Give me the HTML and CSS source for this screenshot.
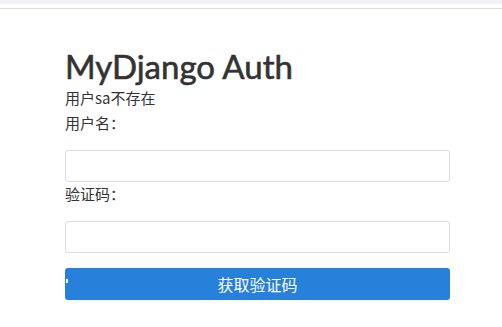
FILE: index.html
```html
<!DOCTYPE html>
<html lang="zh-CN">
<head>
<meta charset="utf-8">
<link rel="stylesheet" href="styles.css">
</head>
<body>
<div class="topbar"></div>
<div class="divider"></div>
<main class="container">
  <h1 class="title">MyDjango Auth</h1>
  <div class="error">用户sa不存在</div>
  <form class="form">
    <label class="label first">用户名：</label>
    <input class="input" type="text">
    <label class="label">验证码：</label>
    <input class="input" type="text">
    <button class="btn" type="button"><span class="notch"></span>获取验证码</button>
  </form>
</main>
</body>
</html>
```

FILE: styles.css
```css
html, body {
  margin: 0;
  padding: 0;
  background: #fff;
}
body {
  font-family: "Noto Sans CJK SC", "Noto Sans", sans-serif;
  color: #333;
  font-size: 15px;
}
.topbar {
  height: 4px;
  background: #f1f3f4;
}
.divider {
  height: 1px;
  margin-top: 4px;
  background: #dcdcdc;
}
.container {
  width: 385px;
  margin-left: 65px;
}
.title {
  font-family: "Lato", "Open Sans", sans-serif;
  font-weight: 400;
  font-size: 33px;
  line-height: 40px;
  margin: 37px 0 0 0;
  color: #333;
  -webkit-text-stroke: 0.6px #333;
}
.error {
  line-height: 20px;
  margin-top: 2px;
}
.form {
  display: flex;
  flex-direction: column;
}
.label {
  line-height: 20px;
  margin-top: 4px;
}
.label.first {
  margin-top: 5px;
}
.input {
  box-sizing: border-box;
  height: 32px;
  border: 1px solid #dcdcdc;
  border-radius: 3px;
  margin-top: 17px;
  padding: 0 8px;
  outline: none;
}
.input + .label {
  margin-top: 2px;
}
.btn {
  position: relative;
  box-sizing: border-box;
  height: 32px;
  margin-top: 15px;
  border: none;
  border-radius: 3px;
  background: #2780da;
  color: #fff;
  font-family: "Noto Sans CJK SC", sans-serif;
  font-size: 16px;
  cursor: pointer;
}
.notch {
  position: absolute;
  left: 1px;
  top: 11px;
  width: 2px;
  height: 4px;
  background: #fff;
}
```
